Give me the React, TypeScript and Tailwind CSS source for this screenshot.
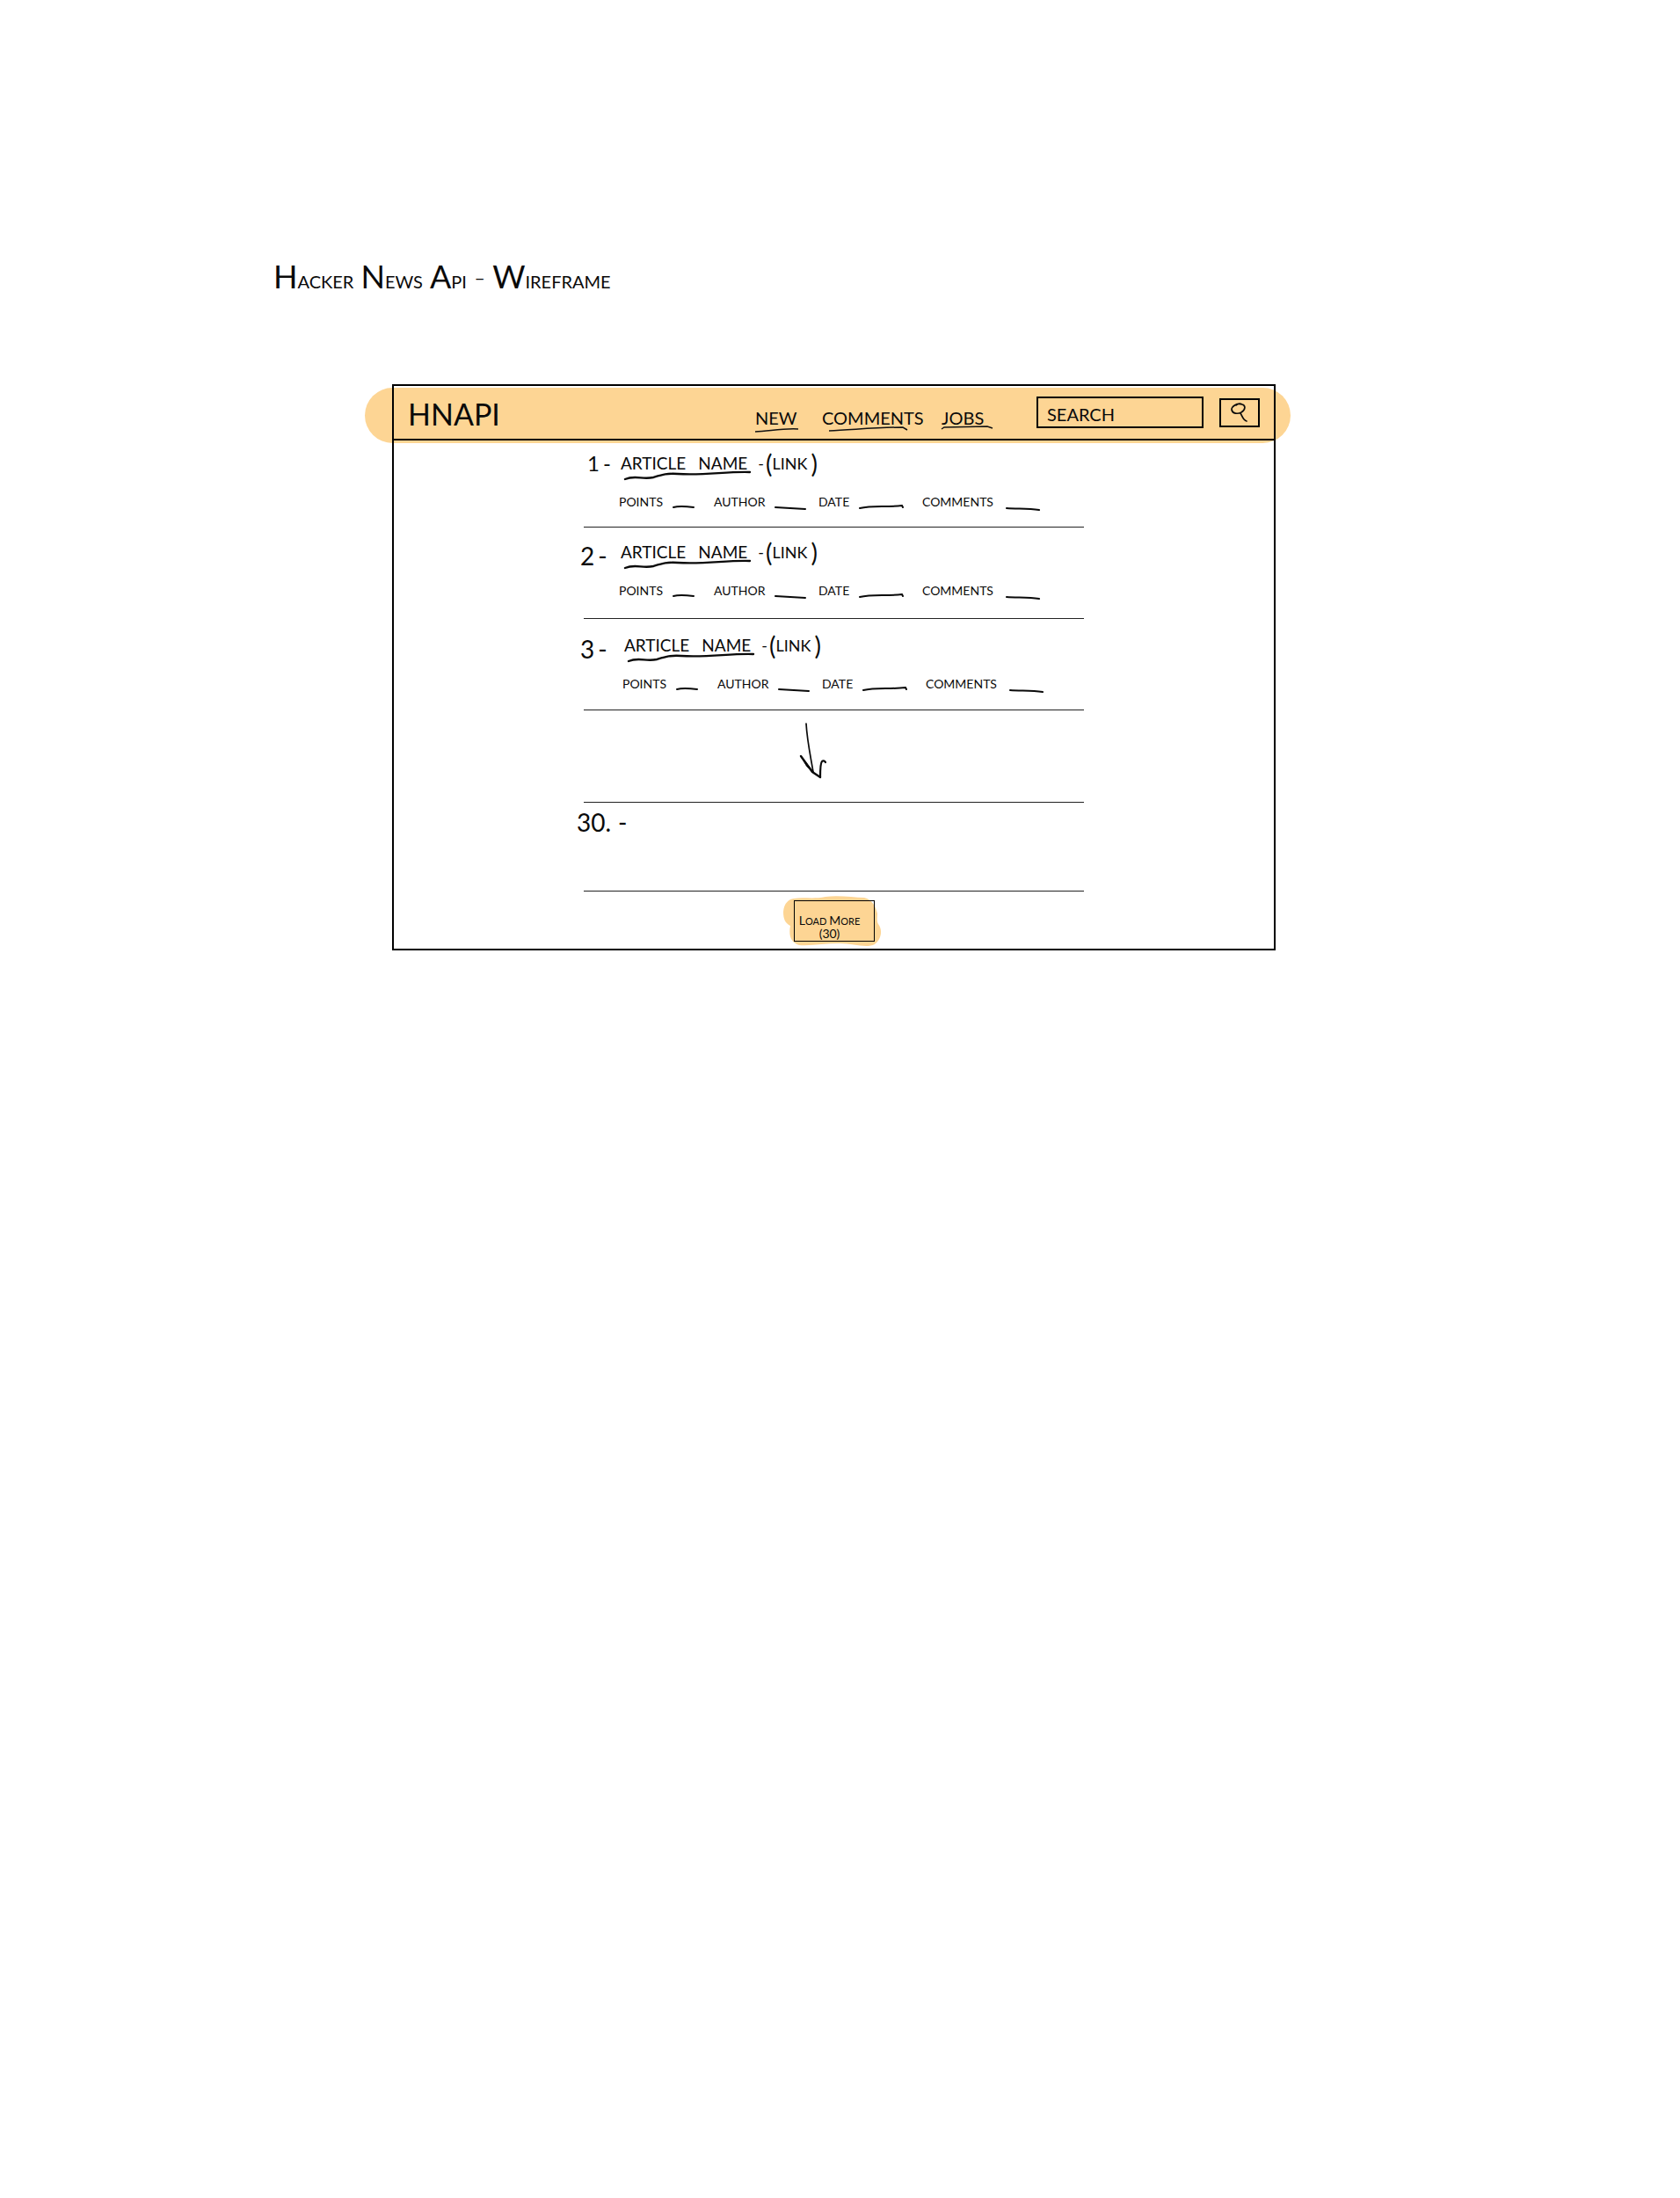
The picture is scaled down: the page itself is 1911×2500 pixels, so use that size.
import React from "react";

const TITLE_WORDS = ["HACKER", "NEWS", "API", "-", "WIREFRAME"];

function Word({ text }: { text: string }) {
  if (text === "-") return <span className="text-4xl font-light leading-10">-</span>;
  return (
    <span className="text-xl leading-10">
      <span className="text-4xl leading-10">{text[0]}</span>
      {text.slice(1)}
    </span>
  );
}

type NavItem = { label: string; stroke: string; width: string };

const NAV: NavItem[] = [
  { label: "NEW", stroke: "M0 7 C18 6 32 3 49 4", width: "w-[76px]" },
  { label: "COMMENTS", stroke: "M8 6 C35 5 60 2 92 2 L97 5", width: "w-[136px]" },
  { label: "JOBS", stroke: "M0 4 L3 2 L52 1 L58 3", width: "w-[60px]" },
];

function NavLink({ item }: { item: NavItem }) {
  return (
    <div className={item.width}>
      <a href="#" className="relative inline-block text-xl leading-6">
        {item.label}
        <svg
          className="absolute left-0 top-[21px] overflow-visible"
          width="100"
          height="8"
          fill="none"
          stroke="#111"
          strokeWidth="1.5"
          aria-hidden="true"
        >
          <path d={item.stroke} />
        </svg>
      </a>
    </div>
  );
}

type Field = { label: string; blank: string; width: number };

const FIELDS: Field[] = [
  { label: "POINTS", blank: "M0 6 C7 4 15 5 23 6", width: 24 },
  { label: "AUTHOR", blank: "M0 6 L34 8", width: 34 },
  { label: "DATE", blank: "M0 7 C14 4 30 6 48 4 L49 6", width: 50 },
  { label: "COMMENTS", blank: "M3 7 C15 8 27 7 40 9", width: 42 },
];

function Article({ rank, pad }: { rank: number; pad: string }) {
  return (
    <li className={"border-b border-[#222] " + pad}>
      <div className="-ml-1 flex">
        <span className={rank === 1 ? "w-[46px] pl-2 text-2xl leading-8" : "w-[46px] pt-1 text-[28px] leading-8"}>
          {rank}
          <span className="ml-1">-</span>
        </span>
        <div className={rank === 3 ? "ml-1" : ""}>
          <div className="flex h-8 items-center">
            <a href="#" className="relative flex gap-3.5 text-[19px] leading-6">
              <span>ARTICLE</span>
              <span>NAME</span>
              <svg
                className="absolute left-[3px] top-5"
                width="146"
                height="12"
                fill="none"
                stroke="#0a0a0a"
                strokeWidth="2.4"
                strokeLinecap="round"
                aria-hidden="true"
              >
                <path d="M2 10 C14 5 22 11 34 8 C44 5 50 3 62 4 C92 6 118 1 144 2" />
              </svg>
            </a>
            <span className="ml-3 flex items-center text-lg leading-6">
              <span>-</span>
              <span className="ml-0.5 text-[28px]">(</span>
              <span>LINK</span>
              <span className="ml-1 text-[28px]">)</span>
            </span>
          </div>
          <dl className="-ml-0.5 mt-[18px] grid grid-cols-[108px_119px_118px_auto] text-sm leading-5">
            {FIELDS.map((f) => (
              <div key={f.label} className="flex items-end gap-3">
                <dt>{f.label}</dt>
                <dd>
                  <svg
                    className="block overflow-visible"
                    width={f.width}
                    height="10"
                    fill="none"
                    stroke="#0a0a0a"
                    strokeWidth="2"
                    strokeLinecap="round"
                    aria-hidden="true"
                  >
                    <path d={f.blank} />
                  </svg>
                </dd>
              </div>
            ))}
          </dl>
        </div>
      </div>
    </li>
  );
}

export default function App() {
  return (
    <main className="isolate min-h-screen bg-white font-['Lato',sans-serif] text-[#0a0a0a]">
      <h1 className="box-content flex h-[138px] items-baseline gap-2 pl-[311px] pt-[294px]">
        {TITLE_WORDS.map((w) => (
          <Word key={w} text={w} />
        ))}
      </h1>

      <div className="pr-3.5 pt-[5px]">
        <section className="mx-auto w-full max-w-[1005px] border-2 border-black">
          <header className="relative flex h-[62px] items-center border-b-2 border-black">
            <div className="absolute -left-[33px] -right-[19px] top-[2px] -z-10 h-[63px] rounded-full bg-[#fdd594]" />
            <span className="ml-4 mt-1 text-[34px] leading-10">HNAPI</span>
            <nav aria-label="Sections" className="ml-auto mt-3.5 flex">
              {NAV.map((item) => (
                <NavLink key={item.label} item={item} />
              ))}
            </nav>
            <form className="ml-12 mr-4 flex items-center gap-[18px]" onSubmit={(e) => e.preventDefault()}>
              <input
                type="search"
                aria-label="Search"
                placeholder="SEARCH"
                className="h-9 w-[190px] border-2 border-black bg-transparent pl-2.5 pt-1 text-xl leading-6 outline-none placeholder:text-[#0a0a0a] placeholder:opacity-100"
              />
              <button
                type="submit"
                aria-label="Submit search"
                className="flex h-[33px] w-[46px] items-center justify-center border-2 border-black"
              >
                <svg width="20" height="22" fill="none" stroke="#0a0a0a" strokeWidth="1.7" strokeLinecap="round">
                  <path d="M13 2 C7 0 1 4 1 8 C2 13 8 13 12 11 C17 8 17 3 13 2 C11 1 8 1 6 3" />
                  <path d="M11 12 C13 15 14 20 18 21" />
                </svg>
              </button>
            </form>
          </header>

          <ol className="mx-auto w-full max-w-[569px]">
            <Article rank={1} pad="h-[99px] pt-2.5" />
            <Article rank={2} pad="h-[104px] pt-3" />
            <Article rank={3} pad="h-[104px] pt-3.5" />
            <li className="flex h-[105px] border-b border-[#222] pl-[244px] pt-3.5" aria-label="More articles">
              <svg width="36" height="64" fill="none" stroke="#0a0a0a" strokeLinecap="round" strokeLinejoin="round">
                <path d="M9 1 C10 20 14 38 17 56" strokeWidth="1.7" />
                <path d="M3 38 L16 56 L25 62" strokeWidth="2.4" />
                <path d="M3 38 L18 57 L10 50 Z" fill="#0a0a0a" strokeWidth="1" />
                <path d="M25 62 C25 55 25 46 27 44 C28 43 30 43 31 45" strokeWidth="2.2" />
              </svg>
            </li>
            <li className="h-[101px] border-b border-[#222] pt-1.5">
              <span className="-ml-2 text-[28px] leading-8">
                30.<span className="ml-2">-</span>
              </span>
            </li>
          </ol>

          <div className="flex justify-center pb-2 pt-2.5">
            <div className="relative">
              <svg
                className="absolute -left-[12px] -top-[5px] -z-10"
                width="112"
                height="59"
                fill="#fdd594"
                aria-hidden="true"
              >
                <path d="M12 3 C22 1 34 4 48 1 C64 -1 80 2 92 2 C101 4 105 12 107 20 C107 25 106 28 108 32 C113 38 112 49 104 55 C94 60 80 54 64 54 C48 54 32 57 18 56 C8 53 6 44 8 34 C2 31 0 26 0 18 C1 8 6 4 12 3 Z" />
              </svg>
              <button
                type="button"
                className="flex h-[47px] w-[92px] flex-col items-center justify-end border border-black pb-px pr-2.5 text-center leading-[14px]"
              >
                <span className="text-[11px]">
                  <span className="text-sm leading-[14px]">L</span>OAD{" "}
                  <span className="text-sm leading-[14px]">M</span>ORE
                </span>
                <span className="text-sm leading-[14px]">(30)</span>
              </button>
            </div>
          </div>
        </section>
      </div>
    </main>
  );
}
